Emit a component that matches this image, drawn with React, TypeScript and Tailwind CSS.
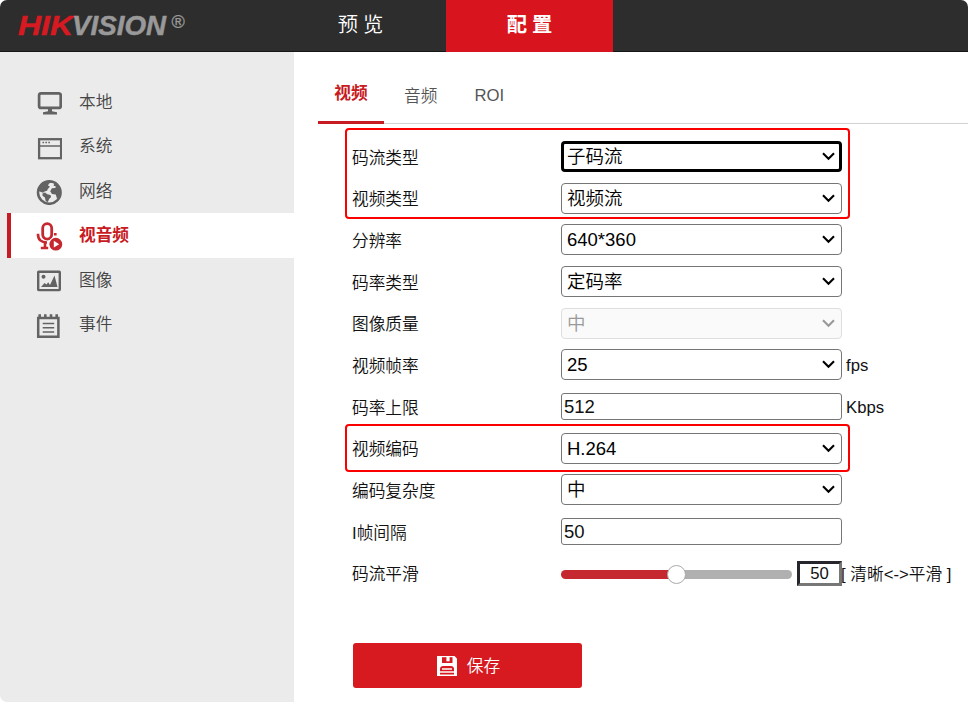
import type { ReactNode } from "react";

type Field = {
  label: string;
  value: string;
  kind: "select" | "input";
  state?: "focused" | "disabled";
  unit?: string;
};

const fields: Field[] = [
  { label: "码流类型", value: "子码流", kind: "select", state: "focused" },
  { label: "视频类型", value: "视频流", kind: "select" },
  { label: "分辨率", value: "640*360", kind: "select" },
  { label: "码率类型", value: "定码率", kind: "select" },
  { label: "图像质量", value: "中", kind: "select", state: "disabled" },
  { label: "视频帧率", value: "25", kind: "select", unit: "fps" },
  { label: "码率上限", value: "512", kind: "input", unit: "Kbps" },
  { label: "视频编码", value: "H.264", kind: "select" },
  { label: "编码复杂度", value: "中", kind: "select" },
  { label: "I帧间隔", value: "50", kind: "input" },
];

function Logo() {
  return (
    <svg width="172" height="36" viewBox="0 -4 172 36" className="block overflow-visible" fontFamily="'Liberation Sans', Arial, sans-serif">
      <g fontSize="28.5" fontWeight="700" fontStyle="italic" strokeWidth="0.5">
        <text x="2" y="24" fill="#d71921" stroke="#d71921" textLength="55" lengthAdjust="spacingAndGlyphs">HIK</text>
        <text x="56" y="24" fill="#999999" stroke="#999999" textLength="94" lengthAdjust="spacingAndGlyphs">VISION</text>
      </g>
      <text x="155.5" y="17" fontSize="18" fill="#999999" stroke="#999999" strokeWidth="0.3">®</text>
    </svg>
  );
}

function MonitorIcon() {
  return (
    <svg width="26" height="26" viewBox="0 0 26 26" fill="none">
      <rect x="3.1" y="4.3" width="21.6" height="14.6" rx="2" stroke="#636363" strokeWidth="2.7" />
      <path d="M12 20h4v2.3l5 1V25.4H7v-2.1l5-1z" fill="#636363" />
    </svg>
  );
}

function WindowIcon() {
  return (
    <svg width="26" height="26" viewBox="0 0 26 26" fill="none">
      <rect x="3.1" y="5.2" width="22" height="19" stroke="#636363" strokeWidth="2.3" />
      <path d="M4 12h20" stroke="#636363" strokeWidth="1.5" />
      <path d="M6.5 8.5h1.6M9.4 8.5h1.6M12.3 8.5h1.6" stroke="#636363" strokeWidth="1.3" />
    </svg>
  );
}

function GlobeIcon() {
  return (
    <svg width="26" height="27" viewBox="0 -1 26 27" fill="none">
      <circle cx="13.3" cy="13.5" r="11.3" stroke="#636363" strokeWidth="2.5" />
      <path d="M2.5 12 3 8l4-4 6-2 4 1-4 1.5-1 2 2 1.2-2 2-1 2-2.5.8-1.5 1.2z" fill="#636363" />
      <path d="M6.5 14.5 9 13.6l2.3 1.6 3.2.8.6 2-2 2-1.2 3-2.2-.7-.8-3.8-2.4-1.8z" fill="#636363" />
      <path d="m18.5 4 3.5 3 2.3 5-.8 5-2.5 2.5-1.3-4-3.7-.6-1.8-2.7 1.7-3 3.2-.2 1-1.3-2.6-1.2z" fill="#636363" />
    </svg>
  );
}

function MicIcon() {
  return (
    <svg width="27" height="30" viewBox="0 0 27 30" fill="none" className="overflow-visible">
      <rect x="6.7" y="2.7" width="9" height="15.4" rx="4.5" stroke="#c5282f" strokeWidth="2.8" />
      <path d="M2 12.8c-.2 6 3.2 8.7 9 8.7M19.3 12v2.5M9 21.5v4.5M4.8 27h7.4" stroke="#c5282f" strokeWidth="2.6" />
      <circle cx="19.8" cy="23.2" r="7.4" fill="#fff" />
      <circle cx="19.8" cy="23.2" r="6.4" fill="#c5282f" />
      <path d="m17.8 19.8 5.4 3.4-5.4 3.4z" fill="#fff" />
    </svg>
  );
}

function PictureIcon() {
  return (
    <svg width="26" height="26" viewBox="0 0 26 26" fill="none">
      <rect x="2.2" y="4.7" width="21.6" height="18.4" rx="0.5" stroke="#636363" strokeWidth="2.4" />
      <circle cx="7.5" cy="9.7" r="2" fill="#636363" />
      <path d="m5 20 3.5-4 2 1.5 1.7-2.2L14 18l4.5-9.5 3 11.5z" fill="#636363" />
    </svg>
  );
}

function NotepadIcon() {
  return (
    <svg width="26" height="28" viewBox="0 0 26 28" fill="none">
      <path d="M2.2 7.1h20.2v18.7H2.2z" stroke="#636363" strokeWidth="2.5" />
      <path d="M3.7 3.3v4M9.3 3.3v4M15 3.3v4M20.7 3.3v4" stroke="#636363" strokeWidth="2.6" />
      <path d="M6.7 12.5h11.5M6.7 16.7h11.5M6.7 21h11.5" stroke="#636363" strokeWidth="1.6" />
    </svg>
  );
}

function SaveIcon() {
  return (
    <svg width="20" height="20" viewBox="0 0 20 20">
      <path d="M0 0h17.5L20 2.5V20H0z" fill="#fff" />
      <path d="M5 1.2h10.5V7H5z" fill="#d71920" />
      <path d="M9.4 1h3.2v4.3H9.4z" fill="#fff" />
      <path d="M3 18.4v-5.2C3 11 4.2 10 6.2 10h7.6c2 0 3.2 1 3.2 3.2v5.2z" fill="#d71920" />
      <path d="M5 13h10M3 16h14" stroke="#fff" strokeWidth="1.3" />
    </svg>
  );
}

function NavItem({ icon, label, active }: { icon: ReactNode; label: string; active?: boolean }) {
  return (
    <li
      className={
        active
          ? "ml-[7px] flex h-[44.5px] items-center border-l-4 border-[#c71a22] bg-white pl-[25px] font-bold text-[#c71a22]"
          : "flex h-[44.5px] items-center pl-9 text-[#444]"
      }
    >
      <span className="flex w-[43px] shrink-0 pt-px">{icon}</span>
      <span className="pt-0.5 leading-6">{label}</span>
    </li>
  );
}

function SelectBox({ value, state }: { value: string; state?: "focused" | "disabled" }) {
  const tone =
    state === "focused"
      ? "border-[3px] border-black pl-[3px] pr-[4px] text-black"
      : state === "disabled"
        ? "border border-[#dedede] bg-[#fafafa] pl-[5px] pr-1.5 text-[#999]"
        : "border border-[#767676] pl-[5px] pr-1.5 text-black";
  return (
    <div className={"flex h-[31px] w-[281px] items-center justify-between rounded-[4px] text-[18.5px] leading-6 " + tone}>
      <span className="pt-px">{value}</span>
      <svg width="13" height="9" viewBox="0 0 13 9" fill="none" stroke="currentColor" strokeWidth="2.1">
        <path d="m1 1.3 5.5 5.4L12 1.3" />
      </svg>
    </div>
  );
}

function FieldRow({ field }: { field: Field }) {
  return (
    <div className="flex h-[41.67px] items-center">
      <span className="w-[209px] shrink-0 pt-1 leading-6">{field.label}</span>
      {field.kind === "select" ? (
        <SelectBox value={field.value} state={field.state} />
      ) : (
        <div className="flex h-[27px] w-[281px] items-center rounded-[3px] border border-[#767676] pl-0.5 text-[18.5px] leading-6">
          {field.value}
        </div>
      )}
      {field.unit && <span className="pl-1 pt-[3px] leading-6">{field.unit}</span>}
    </div>
  );
}

export default function App() {
  return (
    <div className="h-[702px] w-[968px] overflow-hidden bg-white font-['Liberation_Sans','Noto_Sans_CJK_SC',sans-serif] text-[16.7px] font-[350] text-[#111]">
      <div className="flex h-full flex-col overflow-hidden rounded-[7px] bg-white">
        <header className="flex h-[52px] shrink-0 border-b border-[#151515] bg-[#2d2d2d] text-white">
          <div className="w-[278px] pl-4 pt-[7px]">
            <Logo />
          </div>
          <div className="flex w-[168px] items-center justify-center pb-px text-[20.3px] tracking-[5px]">
            <span className="pl-0.5">预览</span>
          </div>
          <div className="-mb-px flex w-[167px] items-center justify-center bg-[#d8151e] pb-0.5 text-[20.3px] font-bold tracking-[5px]">
            <span className="pl-[5px]">配置</span>
          </div>
        </header>

        <div className="flex min-h-0 flex-1">
          <aside className="w-[294px] shrink-0 bg-[#ebebeb] pt-[27.5px]">
            <ul>
              <NavItem icon={<MonitorIcon />} label="本地" />
              <NavItem icon={<WindowIcon />} label="系统" />
              <NavItem icon={<GlobeIcon />} label="网络" />
              <NavItem icon={<MicIcon />} label="视音频" active />
              <NavItem icon={<PictureIcon />} label="图像" />
              <NavItem icon={<NotepadIcon />} label="事件" />
            </ul>
          </aside>

          <main className="relative flex-1 pl-6">
            <nav className="flex h-[72px] border-b border-[#d2d2d2] text-[#555]">
              <div className="-mb-px flex w-[66px] justify-center border-b-[3px] border-[#c71a22] pt-[30px] font-bold leading-6 text-[#c71a22]">
                视频
              </div>
              <div className="pl-5 pt-[33px] leading-6">音频</div>
              <div className="pl-[37px] pt-[32px] leading-6">ROI</div>
            </nav>

            <form className="pl-[34px] pt-[11.8px]">
              {fields.map((field) => (
                <FieldRow key={field.label} field={field} />
              ))}
              <div className="flex h-[41.67px] items-center">
                <span className="w-[209px] shrink-0 pt-1 leading-6">码流平滑</span>
                <div className="flex h-[19px] w-[231px] shrink-0 items-center pt-0.5">
                  <div className="h-[9px] w-[109.5px] rounded-l-full bg-[#c5282f]" />
                  <div className="z-10 -mx-1 size-[19px] shrink-0 rounded-full border border-[#aaa] bg-white" />
                  <div className="h-[9px] flex-1 rounded-r-full bg-[#b0b0b0]" />
                </div>
                <div className="ml-[5px] flex h-[25px] w-[45px] shrink-0 items-center justify-center border-[3px] border-b-[#777] border-l-[#25252b] border-r-[#777] border-t-[#25252b]">
                  50
                </div>
                <span className="-ml-px whitespace-nowrap pt-[3px] leading-6">[ 清晰&lt;-&gt;平滑 ]</span>
              </div>
              <button
                type="button"
                className="ml-px mt-[49px] flex h-[45px] w-[229px] items-center justify-center gap-[10px] rounded-[3px] bg-[#d71920] pl-0.5 text-white"
              >
                <SaveIcon />
                <span className="pt-0.5 leading-6">保存</span>
              </button>
            </form>

            <div className="pointer-events-none absolute left-[51px] top-[76px] h-[91px] w-[505px] rounded-[4px] border-2 border-[#fb0000]" />
            <div className="pointer-events-none absolute left-[51px] top-[372px] h-[48px] w-[505px] rounded-[4px] border-2 border-[#fb0000]" />
          </main>
        </div>
      </div>
    </div>
  );
}
